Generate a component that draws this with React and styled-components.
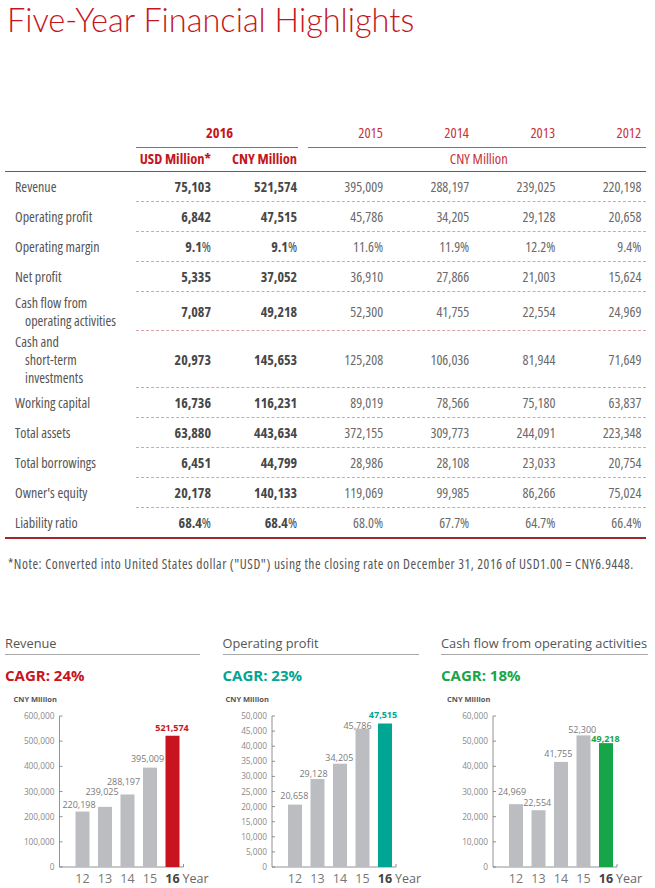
import React from 'react';
import styled, { createGlobalStyle } from 'styled-components';

const RED = '#c4161c';

const GlobalStyle = createGlobalStyle`
  body {
    margin: 0;
    background: #fff;
  }
`;

const rows = [
  { label: ['Revenue'], usd: '75,103', cny: '521,574', years: ['395,009', '288,197', '239,025', '220,198'] },
  { label: ['Operating profit'], usd: '6,842', cny: '47,515', years: ['45,786', '34,205', '29,128', '20,658'] },
  { label: ['Operating margin'], usd: '9.1%', cny: '9.1%', years: ['11.6%', '11.9%', '12.2%', '9.4%'] },
  { label: ['Net profit'], usd: '5,335', cny: '37,052', years: ['36,910', '27,866', '21,003', '15,624'] },
  { label: ['Cash flow from', 'operating activities'], usd: '7,087', cny: '49,218', years: ['52,300', '41,755', '22,554', '24,969'] },
  { label: ['Cash and', 'short-term', 'investments'], usd: '20,973', cny: '145,653', years: ['125,208', '106,036', '81,944', '71,649'] },
  { label: ['Working capital'], usd: '16,736', cny: '116,231', years: ['89,019', '78,566', '75,180', '63,837'] },
  { label: ['Total assets'], usd: '63,880', cny: '443,634', years: ['372,155', '309,773', '244,091', '223,348'] },
  { label: ['Total borrowings'], usd: '6,451', cny: '44,799', years: ['28,986', '28,108', '23,033', '20,754'] },
  { label: ["Owner's equity"], usd: '20,178', cny: '140,133', years: ['119,069', '99,985', '86,266', '75,024'] },
  { label: ['Liability ratio'], usd: '68.4%', cny: '68.4%', years: ['68.0%', '67.7%', '64.7%', '66.4%'] },
];

// value label nudges per bar: [dx, distance of label centre above bar top]
const charts = [
  {
    title: 'Revenue', cagr: '24%', accent: '#c8141e', max: 600000, step: 100000, axisX: 54.5,
    data: [220198, 239025, 288197, 395009, 521574],
    nudge: [[-3.5, 6.6], [-3, 14.8], [-4, 12.5], [-2.5, 9], [-0.5, 7.7]],
  },
  {
    title: 'Operating profit', cagr: '23%', accent: '#00a594', max: 50000, step: 5000, axisX: 49,
    data: [20658, 29128, 34205, 45786, 47515],
    nudge: [[-0.7, 9.3], [-4, 5.3], [-0.7, 5.7], [-5, 3.4], [-2, 8.8]],
  },
  {
    title: 'Cash flow from operating activities', cagr: '18%', accent: '#17a54a', max: 60000, step: 10000, axisX: 52,
    data: [24969, 22554, 41755, 52300, 49218],
    nudge: [[-4, 12], [-1.3, 7], [-2.7, 8], [-1.3, 5.7], [-0.5, 4.4]],
  },
];

const fmt = v => v.toLocaleString('en-US');

const Page = styled.div`
  width: 655px;
  height: 888px;
  overflow: hidden;
  font-family: 'Open Sans', sans-serif;
  font-stretch: 75%;
`;

const Title = styled.h1`
  margin: 0;
  padding-left: 7px;
  font-family: Lato, 'Open Sans', sans-serif;
  font-stretch: normal;
  font-weight: 300;
  font-size: 32.5px;
  line-height: 40px;
  color: ${RED};
  white-space: nowrap;
`;

const Table = styled.div`
  margin: 84px 0 0 5px;
  width: 641px;
  border-bottom: 2.5px solid #a6242c;
`;

const Head = styled.div`
  border-bottom: 1.5px solid #c8323a;
`;

const Row = styled.div`
  display: flex;
`;

const Label = styled.div`
  width: 130.5px;
  flex: none;
  padding: 1.5px 0 1.5px 10px;
  box-sizing: border-box;
  display: flex;
  flex-direction: column;
  justify-content: center;
  font-size: 14px;
  line-height: 18px;
  color: #555;
  white-space: nowrap;
`;

const LabelLine = styled.span`
  padding-left: ${p => (p.$indent ? '10px' : '0')};
`;

const Values = styled.div`
  flex: 1;
  display: grid;
  grid-template-columns: 80px repeat(5, 86.1px);
  min-height: 29px;
  border-bottom: ${p => (p.$last ? 'none' : '1px dashed #d9a3a8')};
`;

const Cell = styled.div`
  display: flex;
  align-items: center;
  justify-content: flex-end;
  padding-right: 4.5px;
  font-size: 14px;
  font-weight: ${p => (p.$bold ? 700 : 400)};
  color: ${p => (p.$bold ? '#474747' : '#6a6a6a')};
`;

const Pct = styled.span`
  font-weight: 400;
`;

const HeadValues = styled.div`
  flex: 1;
  display: grid;
  grid-template-columns: 80px repeat(5, 86.1px);
`;

const Group2016 = styled.div`
  grid-column: span 2;
  margin-right: 4px;
  border-bottom: 1px solid #d05058;
  text-align: center;
  padding: 0 0 5px 6px;
  font-size: 14.5px;
  line-height: 18px;
  font-weight: 700;
  color: ${RED};
`;

const YearGroup = styled.div`
  grid-column: span 4;
  margin-left: 6px;
  display: grid;
  grid-template-columns: 79.8px repeat(3, 86.1px);
  border-bottom: 1px solid #d05058;
`;

const Year = styled.div`
  text-align: right;
  padding: 0 4.5px 5px 0;
  font-size: 14.5px;
  line-height: 18px;
  color: #c8323a;
`;

const Unit = styled.div`
  grid-column: ${p => (p.$wide ? 'span 4' : 'auto')};
  margin-left: ${p => (p.$wide ? '10px' : '0')};
  text-align: ${p => (p.$wide ? 'center' : 'right')};
  padding: 2px ${p => (p.$wide ? '0' : '4.5px')} 3px 0;
  font-size: 14.5px;
  line-height: 18px;
  font-weight: ${p => (p.$wide ? 400 : 700)};
  color: ${p => (p.$wide ? '#c8323a' : RED)};
  white-space: nowrap;
`;

const Note = styled.p`
  margin: 17px 0 0 8px;
  font-size: 13.5px;
  line-height: 16px;
  letter-spacing: 0.55px;
  color: #555;
  white-space: nowrap;
`;

const ChartGrid = styled.div`
  margin-top: 63px;
  padding-left: 5px;
  display: grid;
  grid-template-columns: 195px 196px 207px;
  column-gap: 22.5px;
  font-family: 'Open Sans', sans-serif;
  font-stretch: normal;
`;

const ChartBox = styled.div`
  display: flex;
  flex-direction: column;
`;

const ChartTitle = styled.div`
  padding-bottom: 3px;
  border-bottom: 1.5px solid #a8a8a8;
  font-size: 12.8px;
  line-height: 16px;
  color: #555;
  white-space: nowrap;
`;

const Cagr = styled.div`
  margin-top: 10px;
  font-size: 15px;
  line-height: 20px;
  font-weight: 700;
  color: ${p => p.$color};
`;

const ChartUnit = styled.div`
  margin-top: 9px;
  padding-left: ${p => p.$left}px;
  font-size: 7.5px;
  line-height: 10px;
  font-weight: 700;
  color: #555;
`;

const Svg = styled.svg`
  display: block;
  margin-top: 2px;
  overflow: visible;
`;

function BarChart({ max, step, data, nudge, accent, axisX, width }) {
  const top = 10;
  const base = 161;
  const y = v => base - (v / max) * (base - top);
  const ticks = [];
  for (let v = 0; v <= max; v += step) ticks.push(v);
  const years = ['12', '13', '14', '15', '16'];
  const barX = i => axisX + 16 + i * 22.5;
  return (
    <Svg width={width} height={184}>
      {ticks.map(v => (
        <g key={v}>
          <line x1={axisX} x2={axisX + 3} y1={y(v)} y2={y(v)} stroke="#777" strokeWidth="0.8" />
          <text x={axisX - 5} y={y(v) + 3} textAnchor="end" fontSize="8.3" fill="#8a8a8a">
            {fmt(v)}
          </text>
        </g>
      ))}
      <line x1={axisX} x2={axisX} y1={top} y2={base} stroke="#777" strokeWidth="0.8" />
      <line x1={axisX} x2={axisX + 124} y1={base} y2={base} stroke="#777" strokeWidth="0.8" />
      <line x1={axisX + 124} x2={axisX + 124} y1={base - 3} y2={base} stroke="#777" strokeWidth="0.8" />
      {data.map((v, i) => {
        const last = i === data.length - 1;
        const [dx, up] = nudge[i];
        return (
          <g key={i}>
            <rect x={barX(i)} y={y(v)} width="14" height={base - y(v)} fill={last ? accent : '#bcbdc0'} />
            <text
              x={barX(i) + 7 + dx}
              y={y(v) - up + 3.2}
              textAnchor="middle"
              fontSize="9"
              fontWeight={last ? 700 : 400}
              fill={last ? accent : '#7a7a7a'}
            >
              {fmt(v)}
            </text>
            <text
              x={barX(i) + 7}
              y={base + 15.5}
              textAnchor="middle"
              fontSize="12.5"
              fontWeight={last ? 700 : 400}
              fill={last ? '#444' : '#777'}
            >
              {years[i]}
            </text>
          </g>
        );
      })}
      <text x={barX(4) + 17} y={base + 15.5} fontSize="12.5" fill="#666">
        Year
      </text>
    </Svg>
  );
}

const widths = [195, 196, 207];

export default function App() {
  return (
    <Page>
      <GlobalStyle />
      <Title>Five-Year Financial Highlights</Title>

      <Table>
        <Head>
          <Row>
            <Label />
            <HeadValues>
              <Group2016>2016</Group2016>
              <YearGroup>
                {['2015', '2014', '2013', '2012'].map(y => (
                  <Year key={y}>{y}</Year>
                ))}
              </YearGroup>
            </HeadValues>
          </Row>
          <Row>
            <Label />
            <HeadValues>
              <Unit>USD Million*</Unit>
              <Unit>CNY Million</Unit>
              <Unit $wide>CNY Million</Unit>
            </HeadValues>
          </Row>
        </Head>

        {rows.map((r, i) => (
          <Row key={r.label[0]}>
            <Label>
              {r.label.map((l, j) => (
                <LabelLine key={l} $indent={j > 0}>
                  {l}
                </LabelLine>
              ))}
            </Label>
            <Values $last={i === rows.length - 1}>
              {[r.usd, r.cny].map((v, k) => (
                <Cell key={k} $bold>
                  {v.endsWith('%') ? (
                    <>
                      {v.slice(0, -1)}
                      <Pct>%</Pct>
                    </>
                  ) : (
                    v
                  )}
                </Cell>
              ))}
              {r.years.map((v, k) => (
                <Cell key={k + 2}>{v}</Cell>
              ))}
            </Values>
          </Row>
        ))}
      </Table>

      <Note>
        *Note: Converted into United States dollar ("USD") using the closing rate on December 31, 2016 of USD1.00 = CNY6.9448.
      </Note>

      <ChartGrid>
        {charts.map((c, i) => (
          <ChartBox key={c.title}>
            <ChartTitle>{c.title}</ChartTitle>
            <Cagr $color={c.accent}>CAGR: {c.cagr}</Cagr>
            <ChartUnit $left={c.axisX - 46}>CNY Million</ChartUnit>
            <BarChart {...c} width={widths[i]} />
          </ChartBox>
        ))}
      </ChartGrid>
    </Page>
  );
}
